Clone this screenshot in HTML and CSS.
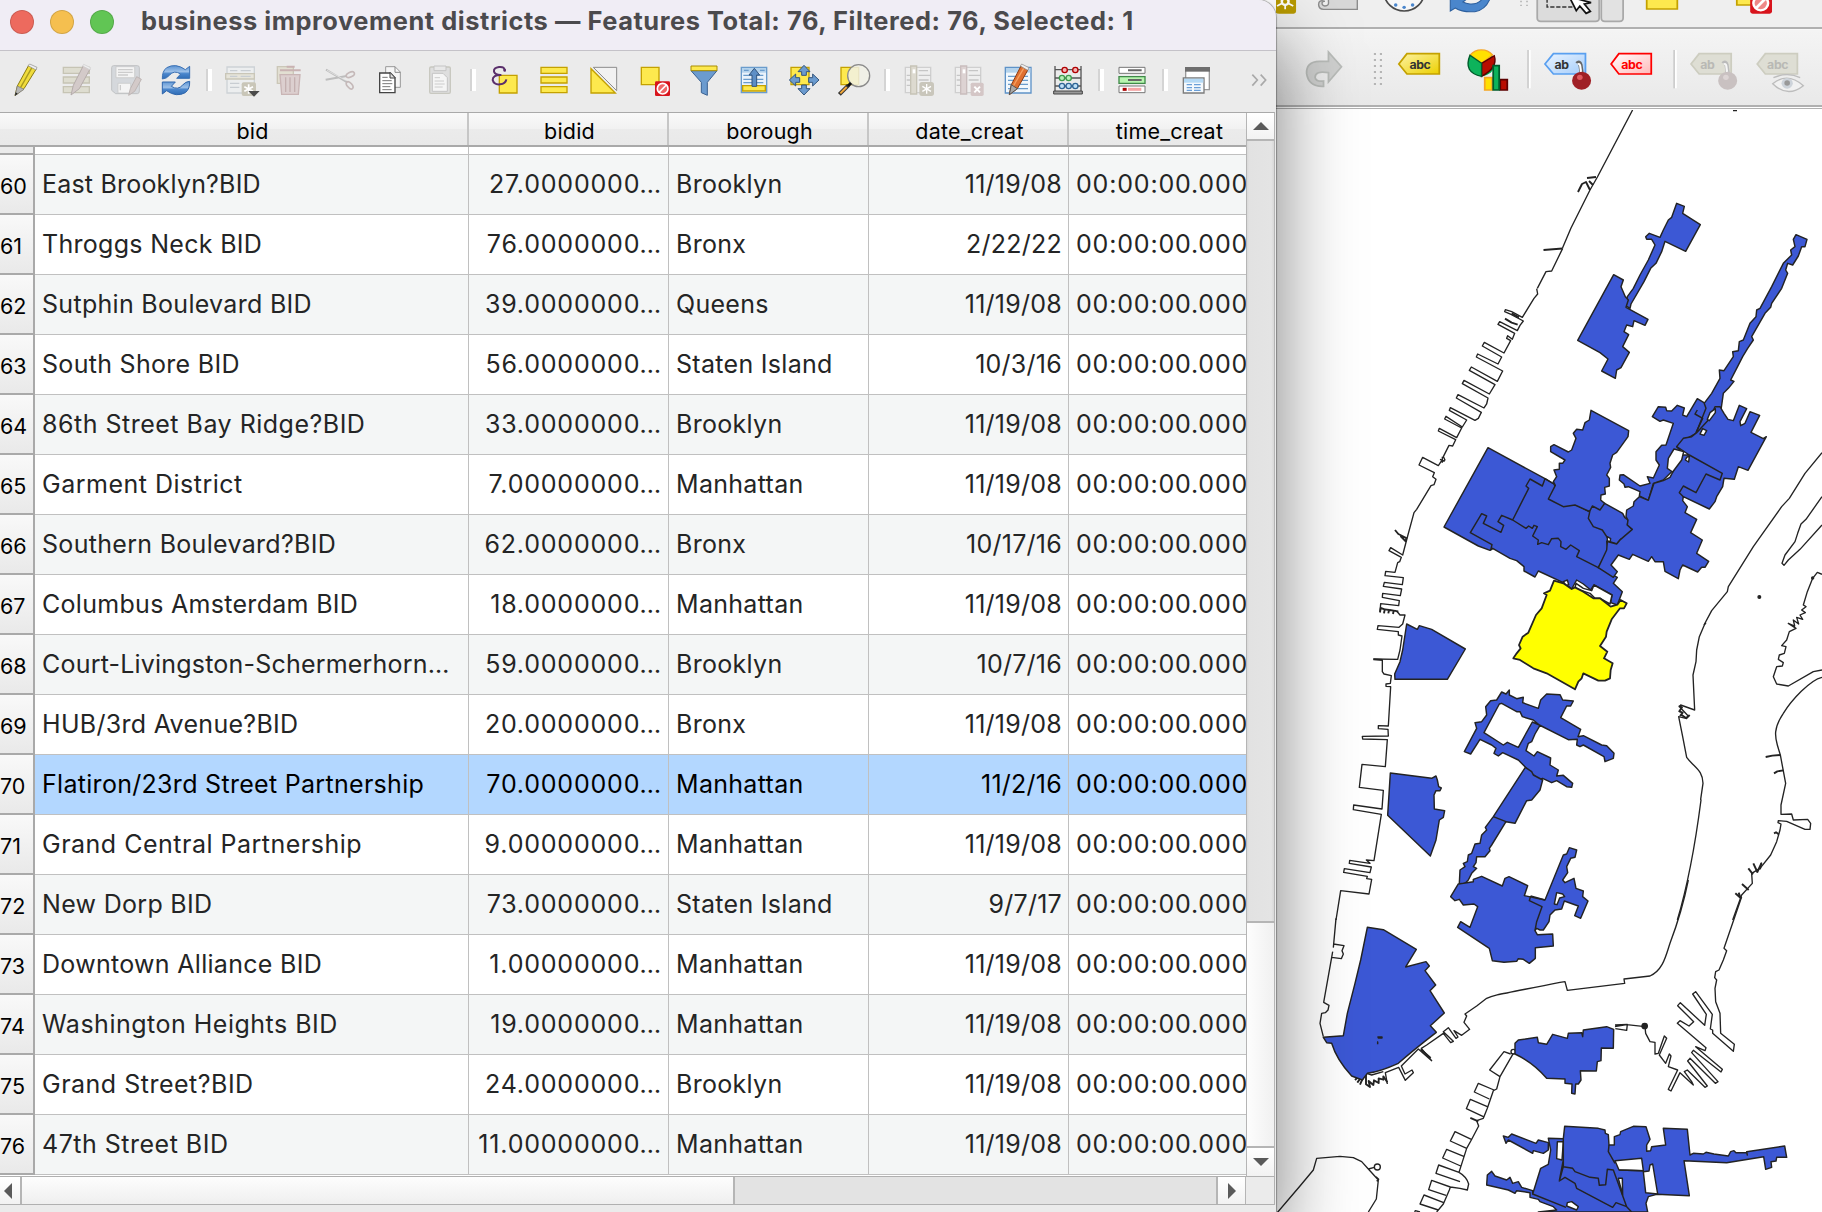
FILE: index.html
```html
<!DOCTYPE html>
<html lang="en">
<head>
<meta charset="utf-8">
<title>business improvement districts</title>
<link rel="stylesheet" href="styles.css">
</head>
<body>
<svg class="defs" width="0" height="0" aria-hidden="true">
  <defs>
    <linearGradient id="blue" x1="0" y1="0" x2="0" y2="1"><stop offset="0" stop-color="#5b93d2"/><stop offset=".45" stop-color="#9cc0e8"/><stop offset=".6" stop-color="#4a86cc"/><stop offset="1" stop-color="#2f6cb5"/></linearGradient>
    <linearGradient id="yel" x1="0" y1="0" x2="1" y2="1"><stop offset="0" stop-color="#fdf3a6"/><stop offset="1" stop-color="#ecd000"/></linearGradient>
    <linearGradient id="sky" x1="0" y1="0" x2="1" y2="1"><stop offset="0" stop-color="#eaf4ff"/><stop offset="1" stop-color="#a5cdfb"/></linearGradient>
    <linearGradient id="pink" x1="0" y1="0" x2="1" y2="1"><stop offset="0" stop-color="#fff"/><stop offset="1" stop-color="#ffb9b9"/></linearGradient>
  </defs>
</svg>

<section class="qgis">
  <div class="bar bar-top">
    <svg width="31" height="27" viewBox="17 0 88.06 81" preserveAspectRatio="none"><path d="M0-10H74V34q0 7-7 7H26q-12 0-12-12z" fill="#b89a00"/><path d="M43-14V28M20-8l46 26M66-8L20 18" stroke="#fff" stroke-width="5"/><circle cx="43" cy="5" r="13" fill="#fff"/><circle cx="43" cy="5" r="6" fill="#b89a00"/></svg>
    <svg width="65" height="27" viewBox="105.1 0 184.6 81" preserveAspectRatio="none"><path d="M166-5V5q2 13-10 13-9-1-8-10 1-5 8-4-18-6-18 10 1 14 14 14h96V-5" fill="#d8d8d8" stroke="#8c8c8c" stroke-width="4"/></svg>
    <svg width="65" height="27" viewBox="289.7 0 184.6 81" preserveAspectRatio="none"><circle cx="381" cy="-24" r="57" fill="#f7f7f7" stroke="#4a4a4a" stroke-width="5"/><g fill="#4a86cc"><circle cx="381" cy="22" r="5"/><circle cx="357" cy="15" r="5"/><circle cx="405" cy="15" r="5"/></g></svg>
    <svg width="68" height="27" viewBox="474.3 0 193.2 81" preserveAspectRatio="none"><path d="M512-8V33L526 24Q548 38 582 35 612 30 625-4L604-4Q590 14 568 12 556 10 548 6L560-4z" fill="#4a86cc" stroke="#2c5f9e" stroke-width="3"/></svg>
    <svg width="28" height="27" viewBox="667.5 0 79.5 81" preserveAspectRatio="none"><path d="M713 2v16M730 2v16" stroke="#b8b8b8" stroke-width="5" stroke-dasharray="5 7"/></svg>
    <svg width="67" height="27" viewBox="747 0 190.4 81" preserveAspectRatio="none"><path d="M759-5V54q0 10 10 10H925q10 0 10-10V-5" fill="#dcdcdc" stroke="#a9a9a9" stroke-width="5"/><path d="M787-4V21H885" fill="none" stroke="#333" stroke-width="4" stroke-dasharray="12 5"/><path d="M850-10L870 32 880 18 898 40 910 34 893 12 912 8z" fill="#fff" stroke="#111" stroke-width="5"/></svg>
    <svg width="24" height="27" viewBox="937.4 0 68.1 81" preserveAspectRatio="none"><path d="M941-5V54q0 10 10 10H993q10 0 10-10V-5" fill="#e2e2e2" stroke="#a9a9a9" stroke-width="5"/></svg>
    <svg width="75" height="27" viewBox="1005.5 0 213.1 81" preserveAspectRatio="none"><path d="M1070-5V27H1157V-5" fill="#fde94e" stroke="#c4a100" stroke-width="5"/></svg>
    <svg width="123" height="27" viewBox="1218.6 0 349.4 81" preserveAspectRatio="none"><path d="M1326-5V15H1380V-5" fill="#fde94e" stroke="#c4a100" stroke-width="5"/><path d="M1364-5V34q0 7 7 7h48q7 0 7-7V-5z" fill="#d8141c"/><circle cx="1394" cy="10" r="21" fill="#e88" stroke="#fff" stroke-width="7"/><path d="M1380 25l28-30" stroke="#fff" stroke-width="8"/></svg>
  </div>
  <div class="bar bar-labels">
    <svg width="82" height="76" viewBox="17 87 232.9 228" preserveAspectRatio="none"><path d="M166 153L203 197 166 243V215Q128 208 128 229 130 243 152 240V256Q110 258 104 218 102 182 140 181H166z" fill="#cfd0cf" stroke="#b9bcb9" stroke-width="5"/></svg>
    <svg width="35" height="76" viewBox="249.9 87 99.4 228" preserveAspectRatio="none"><path d="M298 156v98M315 156v98" stroke="#b5b5b5" stroke-width="6" stroke-dasharray="6 12"/></svg>
    <svg width="54" height="76" viewBox="349.4 87 153.4 228" preserveAspectRatio="none"><path d="M366 189L389 158H481V219H389z" fill="url(#yel)" stroke="#c4a100" stroke-width="5"/><text class="tag" x="426" y="205" fill="#333">abc</text></svg>
    <svg width="75" height="76" viewBox="502.8 87 213 228" preserveAspectRatio="none"><circle cx="601" cy="187" r="38" fill="#00b050"/><path d="M601 187L569 162A40 40 0 0 1 632 162z" fill="#ffe000" stroke="#f5a623" stroke-width="4"/><path d="M601 187L637 164Q648 200 601 226z" fill="#b80c00" stroke="#5c0000" stroke-width="4"/><path d="M601 187L568 163Q548 215 601 226z" fill="#0db35b" stroke="#005c2c" stroke-width="4"/><path d="M610 230h21v37H610z" fill="#ffe000" stroke="#f5a623" stroke-width="5"/><path d="M654 236h20v31H654z" fill="#b80c00" stroke="#5c0000" stroke-width="5"/><path d="M634 194h17v73H634z" fill="#0db35b" stroke="#005c2c" stroke-width="5"/></svg>
    <svg width="15" height="76" viewBox="715.8 87 42.6 228" preserveAspectRatio="none"><path d="M733 147V262" stroke="#cdcdcd" stroke-width="5"/><path d="M738 147V262" stroke="#fff" stroke-width="5"/></svg>
    <svg width="70" height="76" viewBox="758.4 87 198.8 228" preserveAspectRatio="none"><path d="M781 189L805 158H896V219H805z" fill="url(#sky)" stroke="#5aa0f0" stroke-width="5"/><text class="tag" x="828" y="205" fill="#333">ab</text><path d="M872 188q7-8 10 4l3 24" fill="none" stroke="#666" stroke-width="12"/><path d="M874 190q5-4 7 4l3 24" fill="none" stroke="#fff" stroke-width="6"/><circle cx="885" cy="239" r="27" fill="#a02026"/><circle cx="880" cy="229" r="8" fill="#e05a60"/></svg>
    <svg width="52" height="76" viewBox="957.3 87 147.7 228" preserveAspectRatio="none"><path d="M969 189L991 158H1083V219H991z" fill="url(#pink)" stroke="#f00" stroke-width="5"/><text class="tag" x="1028" y="205" fill="#f00">abc</text></svg>
    <svg width="30" height="76" viewBox="1105 87 85.2 228" preserveAspectRatio="none"><path d="M1148 147V262" stroke="#cdcdcd" stroke-width="5"/><path d="M1153 147V262" stroke="#fff" stroke-width="5"/></svg>
    <svg width="60" height="76" viewBox="1190.2 87 170.4 228" preserveAspectRatio="none"><path d="M1196 189L1219 158H1310V219H1219z" fill="#deded4" stroke="#cdcdc0" stroke-width="5"/><text class="tag" x="1242" y="205" fill="#b9b9b5">ab</text><path d="M1287 188q7-8 10 4l3 24" fill="none" stroke="#bbb" stroke-width="12"/><path d="M1289 190q5-4 7 4l3 24" fill="none" stroke="#f6f6f6" stroke-width="6"/><circle cx="1300" cy="239" r="27" fill="#c9c1c1"/><circle cx="1295" cy="229" r="8" fill="#ddd5d5"/></svg>
    <svg width="73" height="76" viewBox="1360.6 87 207.4 228" preserveAspectRatio="none"><path d="M1384 189L1407 158H1498V219H1407z" fill="#deded4" stroke="#cdcdc0" stroke-width="5"/><text class="tag" x="1442" y="205" fill="#b9b9b5">abc</text><path d="M1428 248Q1470 212 1515 254 1470 292 1428 248z" fill="#f1f1f1" stroke="#bdbdbd" stroke-width="4"/><path d="M1430 230Q1470 212 1506 230" fill="none" stroke="#bdbdbd" stroke-width="4"/><circle cx="1469" cy="247" r="16" fill="#cdd3da"/><circle cx="1469" cy="246" r="8" fill="#999"/></svg>
  </div>
  <div class="canvas">
    <svg class="map" width="546" height="1102" viewBox="1276 110 546 1102">
      <g class="coast">
        <path d="M1632.6 110L1597.4 177 1590 190 1571 228 1562.5 248M1733 110.5h4"/>
        <path class="thick" d="M1578 192l4-8 4-2 4 8M1587 178l9-1M1589 181l4 4M1543.500 250l19-1.500"/>
        <g transform="translate(1520 180) scale(.33333)">
          <path d="M128 205L95 273 78 275 52 325"/>
        </g>
        <g transform="translate(1365 290) scale(.33333)">
          <path d="M515-4L518 12 507 25 472 82 440 65 421 59 419 65 438 73 475 93 465 106 457 122 404 95 399 103 449 130 442 148 428 137 425 145 437 152 417 189 358 157 352 168 410 201 399 222 338 192 334 201 413 243 397 274 319 231 313 241 390 284 373 312 297 271 292 281 369 324 365 342 357 354 279 314 274 324 349 367 340 385 330 391 256 353 253 361 305 390 292 411 243 379 239 387 290 414 275 443 223 415 220 423 272 449 263 468 252 466 235 500 240 510 228 515 220 527 173 502 162 525 208 548 203 560 213 568 207 584 198 587 155 658 147 668 128 738 113 795 77 773 72 782 109 802 104 815 98 818 90 847 62 844 60 857 115 863 112 884 58 877 55 889 110 897 106 917 53 910 52 922 103 932 101 947 47 941 45 968M232 500v18M225 508l14 6"/>
          <path class="thick" d="M90 720l10 12 24 12-2 10-14-14 12 2M420 86l20 12 18 6M440 70l22 12M45 966l2-12 12 4-2 12M60 958l12 2-2 10M74 960l12 2-2 10M88 962l12 3"/>
        </g>
        <g transform="translate(1300 600) scale(.33333)">
          <path d="M290 33L300 45 315 45 308 72 297 82 234 77 232 88 295 95 295 105 306 108 300 150 293 178 220 177M247 180L247 215 252 222 274 227 271 250 258 252 258 259 272 260 265 378 235 377 235 386 264 388 265 408 187 409 188 417 262 419 256 500 186 493 178 562 250 571 246 627 161 615 160 629 244 643 222 782 199 780 210 790 149 781 148 790 214 801 210 818 133 806 131 817 202 829 200 836 215 838 207 882 122 872 108 960"/>
          <path class="thick" d="M220 178L248 180M1136 318l10 4-8 12 10 4-8 10M1145 345l14 10 10-10M1397 471l20-4 24-2M1422 520l10-6 18-3M1422 700l6-3 8 6M1345 805l14 18M1360 790l12 26 12-26-4 18M1306 880l16 14-6-16M1326 852l20 18"/>
          <path d="M1132 960C1165 850 1185 740 1203 600L1202 598 1209 550C1208 510 1185 505 1160 472L1148 410 1136 350 1158 355 1164 347 1140 322 1142 315 1184 330 1179 225 1188 185 1190 150 1198 110 1213 75 1218 68"/>
          <path d="M1566 232C1530 240 1475 300 1450 340 1420 385 1425 410 1432 435L1441 465 1457 550 1443 615 1443 643 1475 642 1480 660 1523 658 1532 670 1530 688 1515 688 1460 664 1435 662 1434 668 1443 672 1440 690 1430 725 1412 765 1380 805 1355 820 1357 850 1325 885 1298 960"/>
        </g>
        <g transform="translate(1400 380) scale(.33333)">
          <path d="M912 735L935 692 982 635 985 620 1060 500 1145 380 1168 355 1215 280 1266 218M1266 350L1218 418 1203 432 1193 460 1185 485 1155 525 1146 550 1152 556 1165 540 1200 508 1266 435M1266 583L1252 577 1238 595 1222 635 1210 675 1218 680 1205 690 1216 698 1200 705 1208 718 1190 712 1196 732 1180 720 1184 738 1165 730 1188 745 1168 755 1160 780 1145 797 1158 800 1153 820 1138 825 1135 838 1150 848 1147 858 1130 860 1120 890 1130 912 1165 918 1240 875 1266 870"/>
          <circle class="dot" cx="1078" cy="651" r="4"/><circle class="dot" cx="1238" cy="594" r="3"/>
        </g>
        <g transform="translate(1300 880) scale(.33333)">
          <path d="M108 115L100 203M100 192L132 197 126 212 130 222 124 236 95 232M98 215L95 232 71 367 87 376 84 390 76 398 65 400 60 430 70 470M200 580L215 585 250 575M262 612L256 578 296 562 316 601 340 578 336 570 315 582 304 558 355 507 395 542 364 505 380 495 430 460 452 488 460 484 430 455 445 443 468 475 474 471 462 452 485 466 509 448 492 427 500 408 495 402 530 378 560 355C580 345 600 343 780 307L795 305 802 331 974 310 972 297 1050 288C1090 270 1098 225 1110 190 1140 110 1155 50 1165 0"/>
          <path class="thick" d="M165 600l8-8M172 608l10-14M180 614l8-18M198 585l0 28 12 8-4-18 14 12 2-14 14 8 0-14 14 4 0-10 12 18M362 508l30 26"/>
          <path d="M1325 50L1272 205 1280 212 1270 240 1257 270 1247 275 1244 293 1250 300 1245 325 1247 365 1260 400 1262 460 1303 493 1300 514 1238 460 1238 450 1231 447 1237 403 1187 335 1178 342 1219 403 1214 436 1141 368 1133 377 1181 425 1167 438 1140 422 1132 430 1218 503 1215 512 1187 500 1267 568 1263 576 1180 511 1175 518 1254 605 1246 610 1170 535 1163 543 1222 618 1215 622 1162 570 1153 575 1175 605 1180 615 1140 578 1113 633 1105 628 1133 570 1105 560 1113 528 1108 522 1097 550 1078 525 1100 475 1093 468 1075 520 1065 522 1065 487 1050 485 1037 460 1035 440 980 434 945 440M945 435L982 433 980 451 946 446"/>
          <circle class="dot" cx="1034" cy="438" r="8"/><circle cx="640" cy="515" r="7"/>
          <path d="M632 522L612 515 569 570 600 590M582 630L535 610 523 636 568 657M562 680L511 658 499 686 550 710M514 778L465 755 451 783 500 805M493 830L440 808 428 834 482 858M477 877L416 855 408 880 480 905M451 921L395 901 386 929 438 946M433 969L372 945 360 972 415 990M344 996l2-4 14 4M640 520L600 590 590 627 580 632 562 685 550 715 530 722 536 738 514 780 500 805 477 877Q500 890 506 912L502 930 480 925 451 921 448 930 430 972 410 996"/>
          <path class="thick" d="M511 714l24 10"/>
          <path d="M-70 1000L0 918 40 870 50 835 120 829 160 833 185 845 205 867 235 900 229 957 205 996M205 867L223 862M228 890l8 8-6 6"/><circle cx="232" cy="861" r="9"/>
        </g>
      </g>
      <g class="district">
        <g transform="translate(1520 180) scale(.33333)">
          <path d="M470 70L493 79 488 100 541 134 497 214 435 184 425 215 408 250 392 265 372 305 333 372 330 385 318 378 322 350 340 325 360 285 385 240 405 195 395 178 380 178 377 170 388 160 420 172 430 150 445 120 455 112z"/>
          <path d="M281 284L310 300 303 320 316 350 325 360 318 382 384 418 375 436 342 422 338 440 320 435 312 455 326 464 308 500 328 517 303 563 290 570 286 595 245 573 264 537 240 518 173 481z"/>
          <path d="M828 164L861 178 855 200 845 200 835 228 818 255 803 250 797 270 803 280 785 325 755 370 752 382 735 400 695 470 700 480 683 505 668 530 650 565 632 600 642 604 625 625 610 640 603 690 545 765 525 740 528 700 545 680 575 640 600 595 598 570 612 572 640 530 638 515 655 512 658 485 670 480 690 430 708 410 710 390 720 385 755 320 790 250 815 225 812 210 825 200 820 178z"/>
        </g>
        <g transform="translate(1400 380) scale(.33333)">
          <path d="M264 203L435 296 462 312 478 350 565 393 640 455 620 485 625 510 595 563 652 592 640 610 667 635 652 675 632 668 636 645 582 615 572 630 550 612 530 600 515 627 490 608 415 573 405 591 372 573 372 560 350 542 330 535 278 505 270 511 235 498 132 441z"/>
          <path d="M573 91L686 152 684 170 650 217 638 225 630 250 632 262 620 285 628 295 628 318 614 322 616 342 603 345 602 360 614 370 607 390 565 393 525 375 490 380 445 357 466 316 460 305 470 290 462 270 478 268 478 250 488 250 495 240 452 215 452 200 462 194 505 216 515 210 528 175 520 160 530 148 548 150 555 128 568 120z"/>
          <path d="M614 370L668 400 674 412 684 420 682 435 697 448 680 480 662 478 650 492 630 485 607 450 580 440 565 415 570 392 577 378 600 390z"/>
          <path d="M757 110L775 80 797 82 800 92 815 93 832 76 853 84 848 105 860 110 892 56 912 68 918 85 888 160 850 182 830 200 845 215 815 275 790 300 760 310 745 361 718 348 720 335 685 320 675 322 672 312 658 300 660 285 670 284 720 318 750 310 742 290 760 294 778 255 768 240 768 215 785 196 798 195 820 130 790 120 780 124z"/>
          <path d="M945 80L960 80 972 100 984 118 1000 122 1018 76 1040 86 1020 125 1022 137 1035 130 1050 95 1079 106 1053 157 1090 176 1099 170 1044 271 1015 260 1003 298 972 295 968 320 950 350 945 365 928 387 850 350 848 362 862 380 855 398 890 418 872 458 907 480 890 520 926 544 915 562 905 562 893 576 848 555 840 570 835 596 795 574 790 545 765 545 755 530 745 544 698 523 688 538 655 525 633 555 652 575 640 592 595 563 620 510 622 485 650 492 662 478 697 448 682 435 684 420 678 410 680 390 700 378 702 365 718 350 745 361 762 310 790 302 810 292 845 225 868 225 830 200 850 175 875 170 890 158 930 115z"/>
          <path class="hole" d="M822 207L851 215 845 240 818 276 802 265 805 235z"/><path class="hole" d="M946 86L946 98 928 122 922 118 930 98zM908 146L920 152 912 166 900 162zM860 232l8-4-2 18-10-6zM622 470l10 6-2 10-8-4zM490 605l12-5 4 14-8 2z"/>
          <path class="hole" d="M528 610L550 625 575 632 582 615 636 645 630 672 600 655 585 655 570 640 525 625z"/>
          <path class="line" d="M435 296L427 318 390 297 378 318 386 325 338 420 378 445 386 438 397 445 402 436 412 440 398 468 415 480 413 493 425 488 445 494 455 476 475 475 483 485 482 500 498 508 512 495 538 512 530 530 595 563M338 420L305 406 294 425 311 436 303 457 250 430 260 408 245 401 211 458 276 494 272 511M435 296L462 312M868 225L967 280 960 300 918 282 888 338 850 318 838 338 850 350M892 90L885 102 908 115 888 158"/>
          <path class="selected" d="M462 602L490 610 515 627 525 622 550 635 580 655 600 655 632 680 652 674 662 660 680 670 672 685 660 685 635 718 620 755 618 770 600 798 622 815 612 835 638 850 632 870 630 895 615 902 595 902 550 880 545 895 535 905 525 928 440 880 400 865 360 840 340 835 350 820 362 805 357 795 368 770 385 758 408 705 425 685 440 645 432 640 450 632z"/>
        </g>
        <g transform="translate(1300 600) scale(.33333)">
          <path d="M320 72L352 88 358 77 395 88 496 147 442 238 285 238 284 222 300 185 308 150z"/>
          <path d="M271 519L395 535 408 528 412 540 416 560 424 564 420 572 408 572 402 585 403 627 434 632 430 652 418 660 408 720 391 768 263 646z"/>
          <path d="M590 300L605 276 618 282 628 270 628 285 650 296 670 292 668 308 715 325 722 300 740 282 780 284 788 300 820 303 812 318 800 318 782 353 842 388 834 410 850 407 905 435 920 437 942 460 940 475 915 485 912 470 850 435 840 440 830 435 832 418 805 419 718 375 700 360 667 350 660 335 650 335 605 310 598 312 552 398 610 435 622 427 655 442 697 366 720 376 705 402 695 425 685 430 678 452 702 468 712 455 752 474 750 495 775 510 770 528 790 526 818 550 815 562 800 560 770 542 755 548 728 535 715 538 690 515 655 480 608 458 595 468 582 460 588 445 575 435 540 418 512 462 493 455 530 385 525 368 545 365 560 345 557 320 572 302z"/>
          <path d="M676 502L695 515 700 525 728 540 720 570 695 600 680 602 645 670 618 665 575 735 568 745 570 752 555 770 530 770 528 788 520 800 530 805 515 820 505 840 490 855 478 850 480 810 495 800 490 790 502 785 505 765 515 760 525 732 540 730 545 705 560 690 556 682 580 650z"/>
          <path d="M475 852L490 850 520 845 520 838 545 829 607 858 615 835 627 830 683 857 673 887 735 900 790 765 800 762 808 743 830 750 825 772 812 775 800 800 803 818 788 840 795 848 822 835 828 865 850 873 848 890 864 903 842 955 824 947 835 918 793 903 785 927 765 930 750 945 747 965 730 990 720 990 710 985 705 992 712 1004 758 1002 760 1038 706 1043 706 1075 688 1090 670 1078 655 1076 650 1084 612 1087 577 1082 568 1045 473 982 482 965 510 982 533 920 522 912 490 915 478 898 465 902 452 890z"/>
          <path class="hole" d="M770 878l18 4 6 8-15 4-8 20-8-2z"/>
          <path class="line" d="M580 650L618 665M692 888L688 902 726 920 710 965 705 992M735 900L692 888"/>
        </g>
        <g transform="translate(1300 880) scale(.33333)">
          <path d="M202 142L250 149 349 208 317 261 378 245 388 258 375 272 407 315 390 332 433 399 391 437 409 457Q340 510 295 550 240 575 202 580L187 600 155 588Q110 540 95 490L80 488 70 472 130 467 142 400 165 310 182 240z"/>
          <path class="ink" d="M234 471h12v3h-11zM231 486h2v7"/>
          <path d="M645 490L655 480 712 472 715 488 740 493 758 463 802 475 805 460 845 458 848 470 850 450 920 440 941 448 940 505 904 504 903 542 892 545 889 573 841 572 843 600 835 612 827 612 825 642 815 640 816 612 795 610 795 597 740 595Q700 548 645 522z"/>
        </g>
        <g transform="translate(1480 1100) scale(.33333)">
          <path d="M70 108L85 112 95 102 168 130 175 120 205 128 205 150 190 160 160 152 158 160 85 120 78 130z"/>
          <path d="M205 115L250 116 254 79 355 85 375 90 376 100 385 104 387 135 403 135 403 110 420 104 422 95 460 79 498 80 510 118 500 135 500 154 512 152 515 140 557 135 550 85 622 88 630 165 640 160 670 162 678 157 702 162 745 168 752 155 762 152 768 158 800 158 802 165 800 155 914 138 920 172 890 172 888 183 873 185 875 202 857 208 851 170 740 188 612 182 628 287 530 283 505 290 498 310 503 336 175 336 230 330 220 320 180 305 175 298 150 292 150 278 110 272 105 280 85 270 20 255 22 225 35 214 45 228 80 240 90 232 98 250 115 245 125 262 158 272 158 282 182 205 205 193 212 150z"/>
          <path class="hole" d="M232 125H250L246 180 230 176zM405 182L485 175 490 212 417 210zM490 215L507 213 510 195 518 192 533 282 497 278zM415 235L427 235 428 285zM262 308L275 305 295 320 290 330 260 318z"/>
          <path class="line" d="M250 116L250 200 278 205 285 215 330 232 355 235 358 256 377 254 382 208 400 210 440 320 455 336M158 282L258 322M250 200L238 243 255 232 285 250 290 265 398 322 408 308 440 320M387 135L385 155 405 190M417 210L490 212M250 180l-12 62"/>
        </g>
      </g>
    </svg>
  </div>
</section>

<section class="window">
  <header class="titlebar">
    <i class="light red"></i><i class="light amber"></i><i class="light green"></i>
    <h1>business improvement districts — Features Total: 76, Filtered: 76, Selected: 1</h1>
  </header>
  <div class="toolbar">
    <svg viewBox="3 153 150 183"><path d="M45 287L52 258 86 196 108 208 72 266z" fill="#f0dc3c" stroke="#8a7a10" stroke-width="3"/><path d="M62 262L96 202" stroke="#a89a20" stroke-width="4"/><path d="M84 197l24 13 3-8-22-10z" fill="#eee" stroke="#888" stroke-width="2"/><path d="M45 287L52 258 72 268z" fill="#b5b5b5" stroke="#777" stroke-width="2"/><path d="M45 287l2-10 6 4z" fill="#222"/></svg>
    <svg viewBox="153 153 150 183"><g fill="#deddd0" stroke="#c6c4b4" stroke-width="4"><path d="M190 202h78v18h-78zM190 231h78v18h-78zM190 260h78v18h-78z"/></g><path d="M213 285L220 256 250 197 270 207 238 266z" fill="#d3cac9" stroke="#b5acab" stroke-width="3"/><path d="M248 198l3-5 21 10-3 6z" fill="#eee" stroke="#ccc" stroke-width="2"/></svg>
    <svg viewBox="303 153 150 183"><path d="M335 203q0-6 6-6h71q6 0 6 6v70q0 8-6 8h-65l-12-10z" fill="#d5d8dc" stroke="#c0c2c4" stroke-width="3"/><path d="M348 200h56v33h-56zM354 250h38v29h-38z" fill="#f4f4f4" stroke="#c4c4c4" stroke-width="2"/><path d="M354 209h44M354 217h44M354 225h30M361 255v16" stroke="#ccc" stroke-width="4"/><path d="M386 286L391 266 410 230 424 238 404 274z" fill="#d3cac9" stroke="#bdb5b4" stroke-width="3"/></svg>
    <svg viewBox="453 153 150 183"><path d="M487 237Q486 214 500 203 527 188 556 209L569 199V235H530L542 222Q522 209 508 226 500 236 487 237z" fill="url(#blue)" stroke="#3a70b4" stroke-width="3"/><path d="M569 244Q570 267 556 278 529 293 500 272L487 282V246H526L514 259Q534 272 548 255 556 245 569 244z" fill="url(#blue)" stroke="#2f66ac" stroke-width="3"/></svg>
    <i class="sep"></i>
    <svg viewBox="645 153 150 183"><path d="M681 201h82v78h-82z" fill="#eceeef" stroke="#cdd2d6" stroke-width="4"/><path d="M677 221h86v16h-86z" fill="#e6e4da" stroke="#c9c6b8" stroke-width="4"/><path d="M690 212h22M722 212h30M690 229h22M722 229h30M690 250h28M690 262h28" stroke="#c8cdd2" stroke-width="4"/><rect x="725" y="247" width="43" height="41" rx="6" fill="#c9c6b8"/><path d="M746 253v28M733 260l26 14M759 260l-26 14" stroke="#fff" stroke-width="5"/><path d="M745 273h34l-17 17z" fill="#4a4a4a"/></svg>
    <svg viewBox="795 153 150 183"><path d="M832 200h48v50h-48z" fill="#e2dfd2" stroke="#cbc7b8" stroke-width="4"/><path d="M840 211h62M860 200h24" stroke="#c9b2b2" stroke-width="6"/><path d="M840 224h60l-5 59h-50z" fill="#dccfcf" stroke="#c9b5b5" stroke-width="4"/><path d="M857 232v44M870 232v44M884 232v44" stroke="#c4b0b0" stroke-width="4"/></svg>
    <svg viewBox="945 153 150 183"><path d="M978 209L1042 247M977 239L1040 228" stroke="#bdbdbd" stroke-width="6"/><path d="M981 211l56 30" stroke="#eee" stroke-width="2"/><ellipse cx="1051" cy="224" rx="13" ry="7" transform="rotate(-25 1051 224)" fill="none" stroke="#c5b9b9" stroke-width="5"/><ellipse cx="1049" cy="256" rx="13" ry="7" transform="rotate(50 1049 256)" fill="none" stroke="#c5b9b9" stroke-width="5"/></svg>
    <svg viewBox="1095 153 150 183"><path d="M1157 200h28l16 16v46h-44z" fill="#f6f6f6" stroke="#999" stroke-width="3"/><path d="M1185 200v17h16" fill="none" stroke="#888" stroke-width="3"/><path d="M1139 219h32l14 14v45h-46z" fill="#fff" stroke="#444" stroke-width="4"/><path d="M1170 217v17h16z" fill="#ddd" stroke="#444" stroke-width="3"/><path d="M1147 232h16M1147 242h28M1147 251h30M1147 260h24M1147 269h28" stroke="#777" stroke-width="3"/></svg>
    <svg viewBox="1245 153 150 183"><rect x="1289" y="201" width="62" height="79" rx="4" fill="#dedede" stroke="#c8c8c0" stroke-width="4"/><path d="M1302 198h36v14h-36z" fill="#e8e8e8" stroke="#c4c4c4" stroke-width="3"/><path d="M1297 220h32l13 13v41h-45z" fill="#f5f5f5" stroke="#c4c4c4" stroke-width="3"/><path d="M1304 233h16M1304 243h28M1304 252h30M1304 261h24" stroke="#ccc" stroke-width="3"/></svg>
    <i class="sep"></i>
    <svg viewBox="57 153 150 183"><path d="M118 226h53v53h-53z" fill="#fde94e" stroke="#c4a100" stroke-width="4"/><path d="M134 215Q136 199 117 201 100 203 102 215 106 226 124 225 98 224 98 240 102 255 120 253 137 251 139 238" fill="none" stroke="#5a2f6b" stroke-width="6"/><circle cx="134" cy="210" r="4" fill="#5a2f6b"/></svg>
    <svg viewBox="207 153 150 183"><path d="M243 202h78v18h-78zM243 231h78v18h-78zM243 260h78v18h-78z" fill="#fde94e" stroke="#c4a100" stroke-width="4"/></svg>
    <svg viewBox="357 153 150 183"><path d="M400 202h70v70z" fill="#f2f2f2" stroke="#8c8c8c" stroke-width="3"/><path d="M393 206v73h73z" fill="#fde94e" stroke="#c4a100" stroke-width="4"/></svg>
    <svg viewBox="507 153 150 183"><path d="M544 202h53v52h-53z" fill="#fde94e" stroke="#c4a100" stroke-width="4"/><rect x="585" y="244" width="45" height="44" rx="4" fill="#d8141c"/><circle cx="608" cy="266" r="16" fill="#e66" stroke="#fff" stroke-width="5"/><path d="M597 277l22-22" stroke="#fff" stroke-width="5"/></svg>
    <svg viewBox="657 153 150 183"><path d="M693 212h78L742 247V286L724 278V247z" fill="#6b9bcf" stroke="#3a6191" stroke-width="3"/><path d="M693 198h78v14h-78z" fill="#fde94e" stroke="#a98d00" stroke-width="3"/></svg>
    <svg viewBox="807 153 150 183"><path d="M844 202h76v76h-76z" fill="#eaf3fb" stroke="#6a9ccc" stroke-width="4"/><path d="M846 204h72v14h-72z" fill="#b4d3ec"/><path d="M852 211h14M900 211h14M850 226h60M850 238h60M850 248h60" stroke="#6a9ccc" stroke-width="4"/><path d="M848 257h68v16h-68z" fill="#fde94e" stroke="#c4a100" stroke-width="4"/><path d="M883 205l16 20h-9v34h-14v-34h-9z" fill="#5d8fc6" stroke="#33557c" stroke-width="3"/></svg>
    <svg viewBox="957 153 150 183"><path d="M993 202h54v52h-54z" fill="#fde94e" stroke="#c4a100" stroke-width="4"/><g fill="#6b9bcf" stroke="#33557c" stroke-width="3"><path d="M1032 196l18 19h-11v11h-14v-11h-11zM1032 285l18-19h-11v-11h-14v11h-11zM988 240l19-18v11h12v14h-12v11zM1077 240l-19-18v11h-12v14h12v11z"/></g></svg>
    <svg viewBox="1107 153 150 183"><path d="M1143 202h53v52h-53z" fill="#fde94e" stroke="#c4a100" stroke-width="4"/><circle cx="1196" cy="227" r="33" fill="#f1f1e6" fill-opacity=".85" stroke="#8a8a8a" stroke-width="4"/><path d="M1138 283L1165 256" stroke="#333" stroke-width="12"/><path d="M1141 280L1160 261" stroke="#f5a93a" stroke-width="6"/><path d="M1164 258l9-9" stroke="#111" stroke-width="9"/></svg>
    <i class="sep"></i>
    <svg viewBox="-21 153 150 183"><path d="M16 202h76v76H16z" fill="#efefef" stroke="#cfcfcf" stroke-width="4"/><path d="M56 212h28M56 226h36M56 240h30M20 226h10M20 240h10M20 256h10" stroke="#c6c6c6" stroke-width="4"/><path d="M32 198h18v84H32z" fill="#dddad0" stroke="#c6c3b6" stroke-width="4"/><path d="M38 208h8v12h-8z" fill="#fff"/><rect x="58" y="246" width="44" height="42" rx="8" fill="#c9c6bb"/><path d="M80 252v29M67 259l26 15M93 259l-26 15" stroke="#fff" stroke-width="4"/></svg>
    <svg viewBox="129 153 150 183"><path d="M166 202h76v76h-76z" fill="#efefef" stroke="#cfcfcf" stroke-width="4"/><path d="M206 212h28M206 226h36M206 240h30M170 226h10M170 240h10M170 256h10" stroke="#c6c6c6" stroke-width="4"/><path d="M182 198h18v84h-18z" fill="#ddd3d3" stroke="#c9bdbd" stroke-width="4"/><path d="M188 208h8v12h-8z" fill="#fff"/><rect x="212" y="248" width="39" height="40" rx="5" fill="#d4c6c6"/><path d="M223 260l17 17M240 260l-17 17" stroke="#fff" stroke-width="6"/></svg>
    <svg viewBox="279 153 150 183"><path d="M316 202h77v77h-77z" fill="#f2f8fd" stroke="#5f93c8" stroke-width="4"/><path d="M318 204h73v14h-73z" fill="#b4d3ec"/><path d="M324 229h60M324 241h60M324 253h60M324 266h60" stroke="#6a9ccc" stroke-width="4"/><path d="M328 284L334 254 363 198 384 209 352 266z" fill="#e07030" stroke="#8c3c10" stroke-width="3"/><path d="M340 258L371 205" stroke="#f5a060" stroke-width="4"/><path d="M361 198l4-6 22 11-4 8z" fill="#eee" stroke="#888" stroke-width="2"/><path d="M328 284L334 254 352 266z" fill="#aaa" stroke="#555" stroke-width="3"/></svg>
    <svg viewBox="429 153 150 183"><path d="M465 198v78M543 198v78M465 209h78M465 234h78M465 258h78" stroke="#555" stroke-width="4" fill="none"/><path d="M461 273h86v9h-86z" fill="#999" stroke="#444" stroke-width="3"/><g stroke-width="4"><g fill="#f5b5b5" stroke="#b00000"><circle cx="494" cy="210" r="8"/><circle cx="526" cy="210" r="8"/></g><g fill="#b9f0b9" stroke="#3f9a4b"><circle cx="486" cy="234" r="8"/><circle cx="506" cy="234" r="8"/></g><g fill="#bfe0f7" stroke="#2f6495"><circle cx="486" cy="258" r="8"/><circle cx="506" cy="258" r="8"/><circle cx="526" cy="258" r="8"/></g></g></svg>
    <i class="sep"></i>
    <svg viewBox="621 153 150 183"><path d="M657 202h78v18h-78z" fill="#fff" stroke="#777" stroke-width="3"/><path d="M657 230h78v20h-78z" fill="#b9f5b0" stroke="#3f8a48" stroke-width="4"/><path d="M657 258h78v20h-78z" fill="#fff" stroke="#777" stroke-width="3"/><path d="M684 211h41M684 240h41" stroke="#666" stroke-width="6"/><path d="M668 268h12" stroke="#a00" stroke-width="9"/><path d="M684 268h40" stroke="#f5a5a5" stroke-width="9"/></svg>
    <i class="sep"></i>
    <svg viewBox="813 153 150 183"><path d="M857 203h71v66h-71z" fill="#fff" stroke="#999" stroke-width="4"/><path d="M855 201h75v14h-75z" fill="#6e6e6e"/><path d="M850 234h62v45h-62z" fill="#f4f9fd" stroke="#7c7c7c" stroke-width="4"/><path d="M852 236h58v12h-58z" fill="#b4d9f5"/><path d="M860 254h16M882 254h20M860 263h16M882 263h20M860 271h16M882 271h20" stroke="#6a9fd8" stroke-width="4"/></svg>
    <svg class="more" viewBox="1038 153 84 183"><path d="M1057 224l15 16-15 17M1082 224l15 16-15 17" fill="none" stroke="#a9a9a9" stroke-width="5"/></svg>
  </div>
  <div class="view">
    <div class="table">
      <div class="head"><span>bid</span><span>bidid</span><span>borough</span><span>date_creat</span><span>time_creat</span></div>
      <div class="row stub"><b></b><span></span><span></span><span></span><span></span><span></span></div>
      <div class="row"><b>60</b><span class="tight">East Brooklyn?BID</span><span>27.0000000…</span><span>Brooklyn</span><span>11/19/08</span><span>00:00:00.000</span></div>
      <div class="row"><b>61</b><span>Throggs Neck BID</span><span>76.0000000…</span><span>Bronx</span><span>2/22/22</span><span>00:00:00.000</span></div>
      <div class="row"><b>62</b><span>Sutphin Boulevard BID</span><span>39.0000000…</span><span>Queens</span><span>11/19/08</span><span>00:00:00.000</span></div>
      <div class="row"><b>63</b><span>South Shore BID</span><span>56.0000000…</span><span>Staten Island</span><span>10/3/16</span><span>00:00:00.000</span></div>
      <div class="row"><b>64</b><span class="wide">86th Street Bay Ridge?BID</span><span>33.0000000…</span><span>Brooklyn</span><span>11/19/08</span><span>00:00:00.000</span></div>
      <div class="row"><b>65</b><span class="wide">Garment District</span><span>7.00000000…</span><span>Manhattan</span><span>11/19/08</span><span>00:00:00.000</span></div>
      <div class="row"><b>66</b><span>Southern Boulevard?BID</span><span>62.0000000…</span><span>Bronx</span><span>10/17/16</span><span>00:00:00.000</span></div>
      <div class="row"><b>67</b><span>Columbus Amsterdam BID</span><span>18.0000000…</span><span>Manhattan</span><span>11/19/08</span><span>00:00:00.000</span></div>
      <div class="row"><b>68</b><span class="tight">Court-Livingston-Schermerhorn…</span><span>59.0000000…</span><span>Brooklyn</span><span>10/7/16</span><span>00:00:00.000</span></div>
      <div class="row"><b>69</b><span>HUB/3rd Avenue?BID</span><span>20.0000000…</span><span>Bronx</span><span>11/19/08</span><span>00:00:00.000</span></div>
      <div class="row picked"><b>70</b><span>Flatiron/23rd Street Partnership</span><span>70.0000000…</span><span>Manhattan</span><span>11/2/16</span><span>00:00:00.000</span></div>
      <div class="row"><b>71</b><span class="wide">Grand Central Partnership</span><span>9.00000000…</span><span>Manhattan</span><span>11/19/08</span><span>00:00:00.000</span></div>
      <div class="row"><b>72</b><span>New Dorp BID</span><span>73.0000000…</span><span>Staten Island</span><span>9/7/17</span><span>00:00:00.000</span></div>
      <div class="row"><b>73</b><span>Downtown Alliance BID</span><span>1.00000000…</span><span>Manhattan</span><span>11/19/08</span><span>00:00:00.000</span></div>
      <div class="row"><b>74</b><span class="wide">Washington Heights BID</span><span>19.0000000…</span><span>Manhattan</span><span>11/19/08</span><span>00:00:00.000</span></div>
      <div class="row"><b>75</b><span class="wide">Grand Street?BID</span><span>24.0000000…</span><span>Brooklyn</span><span>11/19/08</span><span>00:00:00.000</span></div>
      <div class="row"><b>76</b><span class="wide">47th Street BID</span><span>11.00000000…</span><span>Manhattan</span><span>11/19/08</span><span>00:00:00.000</span></div>
    </div>
    <div class="vscroll">
      <div class="arrow up"><svg width="16" height="8" viewBox="0 0 16 8"><path d="M0 8L8 0 16 8z"/></svg></div>
      <div class="track"></div>
      <div class="thumb"></div>
      <div class="arrow down"><svg width="16" height="8" viewBox="0 0 16 8"><path d="M0 0L8 8 16 0z"/></svg></div>
    </div>
  </div>
  <div class="hscroll">
    <div class="arrow left"><svg width="8" height="16" viewBox="0 0 8 16"><path d="M8 0L0 8 8 16z"/></svg></div>
    <div class="thumb"></div>
    <div class="track"></div>
    <div class="arrow right"><svg width="8" height="16" viewBox="0 0 8 16"><path d="M0 0L8 8 0 16z"/></svg></div>
    <div class="corner"></div>
  </div>
</section>
</body>
</html>
```
FILE: styles.css
```css
* { box-sizing: border-box; }
body {
  margin: 0;
  width: 1822px;
  height: 1212px;
  overflow: hidden;
  position: relative;
  background: #fff;
  font-family: Inter, "Liberation Sans", sans-serif;
}
.defs { position: absolute; }
svg { display: block; flex: none; }

/* main application window, behind */
.qgis {
  display: flex;
  flex-direction: column;
  margin-left: 1276px;
  width: 546px;
  height: 1212px;
}
.bar { display: flex; flex: none; }
.bar-top { height: 30px; background: #efefef; border-bottom: 1px solid #f8f8f8; box-shadow: inset 0 -2px #b0b0b0; }
.bar-labels { height: 77px; background: linear-gradient(#f4f4f4, #e9e9e9); border-bottom: 2px solid #b0b0b0; }
.tag { font: 700 35px Inter, "Liberation Sans", sans-serif; text-anchor: middle; letter-spacing: -1px; }
.canvas { flex: none; height: 1104px; margin-top: 1px; padding-top: 1px; border-top: 1px solid #b0b0b0; }
.map { overflow: hidden; }
.map * { vector-effect: non-scaling-stroke; }
.coast { fill: none; stroke: #232323; stroke-width: 1.35; stroke-linejoin: round; }
.coast .thick { stroke-width: 1.9; }
.coast .dot { fill: #232323; }
.district { fill: #3c58d5; stroke: #232323; stroke-width: 1.45; stroke-linejoin: round; }
.district .hole { fill: #fff; }
.district .line { fill: none; }
.district .ink { fill: #232323; }
.district .selected { fill: #ff0; stroke-width: 1.8; }

/* attribute table window, in front */
.window {
  position: absolute;
  left: 0;
  top: 0;
  width: 1276px;
  height: 1212px;
  display: flex;
  flex-direction: column;
  background: #ebebeb;
  border-top-right-radius: 18px;
  box-shadow: 0 0 1px 1px rgba(0, 0, 0, .3), 0 38px 80px rgba(0, 0, 0, .52);
}
.titlebar {
  display: flex;
  align-items: center;
  flex: none;
  height: 51px;
  padding: 0 0 7px 10px;
  gap: 16px;
  background: #f0edf5;
  border-bottom: 1px solid #c4c2c8;
  border-top-right-radius: 18px;
}
.light { width: 24px; height: 24px; border-radius: 50%; border: 1px solid rgba(0, 0, 0, .14); }
.red { background: #ed6a5e; }
.amber { background: #f5bf4f; }
.green { background: #61c554; }
.titlebar h1 {
  margin: -2px 0 0 11px;
  font-size: 25.4px;
  font-weight: 700;
  line-height: 30px;
  letter-spacing: .56px;
  color: #4b4a4d;
  white-space: nowrap;
}
.toolbar { display: flex; flex: none; height: 61px; padding-left: 1px; }
.toolbar svg { width: 50px; height: 61px; overflow: visible; }
.toolbar .more { width: 28px; margin-left: 25px; }
.sep { width: 14px; flex: none; padding: 18px 5px 21px; }
.sep::before { content: ""; display: block; width: 4px; height: 22px; border-left: 2px solid #d4d4d4; background: #fff; }
.view { display: flex; flex: none; height: 1064px; width: 1275px; border-top: 1px solid #a9a9a9; border-right: 1px solid #b5b5b5; }
.table { width: 1246px; overflow: hidden; background: #fff; }
.head {
  display: grid;
  grid-template-columns: 469px 200px 200px 200px 200px;
  height: 34px;
  width: 1269px;
  background: linear-gradient(#f9f9f9, #f1f1f1 50%, #ebebeb 51%, #e9e9e9);
  border-bottom: 2px solid #a9a9a9;
  font-size: 21.5px;
  line-height: 36px;
  letter-spacing: .2px;
  text-align: center;
  color: #000;
}
.head span { border-right: 2px solid #c6c6c6; height: 32px; padding-left: 3px; }
.head span:first-child { padding-left: 38px; }
.row {
  display: grid;
  grid-template-columns: 35px 434px 200px 200px 200px 200px;
  grid-template-rows: 100%;
  height: 60px;
  width: 1269px;
  color: #242525;
  font-size: 25px;
  line-height: 59px;
  white-space: nowrap;
}
.row:nth-child(odd) { background: #f4f6f6; }
.row.stub { height: 8px; background: #fff; }
.row b {
  font-weight: 400;
  font-size: 21.5px;
  line-height: 62px;
  color: #000;
  background: linear-gradient(#f9f9f9, #e9e9e9);
  border-right: 2px solid #a9a9a9;
  border-bottom: 2px solid #a9a9a9;
  overflow: hidden;
}
.row.stub b { background: #ebebeb; }
.row span { border-right: 1px solid #c0c0c0; border-bottom: 1px solid #c0c0c0; padding: 0 7px; overflow: hidden; letter-spacing: .3px; }
.row .wide { letter-spacing: .5px; }
.row .tight { letter-spacing: .2px; }
.row span:nth-of-type(2), .row span:nth-of-type(4) { text-align: right; padding-right: 6px; }
.row span:nth-of-type(2) { letter-spacing: .8px; }
.row span:nth-of-type(4) { letter-spacing: .25px; }
.row span:nth-of-type(5) { padding-left: 7px; letter-spacing: .82px; }
.row.picked span { background: #b3d7ff; color: #000; }
.vscroll { width: 28px; border-left: 1px solid #b5b5b5; display: flex; flex-direction: column; }
.arrow { display: flex; align-items: center; justify-content: center; fill: #5a5a5a; background: linear-gradient(#fff, #f2f2f2); flex: none; }
.up { height: 28px; border-bottom: 2px solid #b5b5b5; padding-bottom: 1px; }
.vscroll .track { height: 780px; background: linear-gradient(90deg, #d8d8d8, #e2e2e2 8%, #e4e4e4 90%, #d8d8d8); }
.vscroll .thumb { height: 227px; background: linear-gradient(90deg, #fdfdfd, #f0f0f0); border-top: 2px solid #b5b5b5; border-bottom: 2px solid #b5b5b5; }
.down { height: 28px; }
.hscroll { display: flex; flex: none; width: 1275px; height: 29px; border: solid #b0b0b0; border-width: 1px 1px 1px 0; }
.left { width: 22px; border-right: 2px solid #b5b5b5; padding-right: 4px; }
.hscroll .thumb { width: 713px; background: linear-gradient(#fdfdfd, #efefef); border-right: 2px solid #b5b5b5; }
.hscroll .track { width: 481px; background: #e3e3e3; }
.right { width: 29px; border-left: 2px solid #b5b5b5; }
.corner { flex: 1; border-left: 1px solid #b5b5b5; }
```
